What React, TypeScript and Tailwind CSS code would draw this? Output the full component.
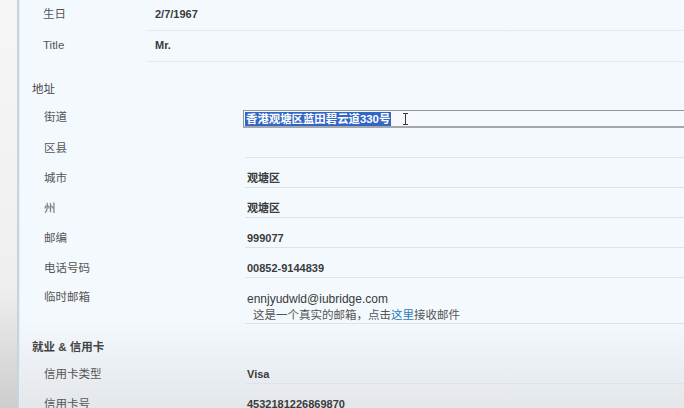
// Profile detail page – address / card section, as seen mid-scroll
import type { ReactNode } from "react";

const labelCls = "text-[11.5px] leading-[14px] text-[#555]";
const valueCls = "text-[11px] leading-[14px] font-bold text-[#3b3b3b]";

function TopRow({ label, value }: { label: string; value: string }) {
  return (
    <div className="flex">
      <div className={`w-[127px] h-[31px] flex items-center pl-[23px] pb-[3px] ${labelCls}`}>{label}</div>
      <div className={`flex-1 h-[31px] flex items-center pl-[8px] pb-[2px] border-b border-[#e3e9ee] ${valueCls}`}>
        {value}
      </div>
    </div>
  );
}

function Row({ label, children, tall }: { label: string; children?: ReactNode; tall?: boolean }) {
  return (
    <div className="flex">
      <div className={`w-[225px] pl-[24px] ${tall ? "pt-[12px]" : "pt-[13px]"} ${labelCls}`}>{label}</div>
      <div
        className={`flex-1 ${tall ? "h-[46px]" : "h-[30px]"} pt-[13px] pl-[2px] text-[11px] leading-[14px] border-b border-[#dde3e8]`}
      >
        {children}
      </div>
    </div>
  );
}

function SectionHead({ children, className }: { children: ReactNode; className?: string }) {
  return (
    <div className={`pl-[12px] text-[11.5px] leading-[14px] font-bold text-[#454545] ${className ?? ""}`}>
      {children}
    </div>
  );
}

function IBeam() {
  return (
    <svg width="7" height="12" viewBox="0 0 7 12" className="ml-[11px]">
      <path d="M1 0.5h5M1 11.5h5M3.5 0.5v11" stroke="#3a3a3a" strokeWidth="1" fill="none" />
    </svg>
  );
}

export default function App() {
  return (
    <div className="w-[684px] h-[408px] overflow-hidden flex font-['Liberation_Sans','Noto_Sans_CJK_SC',sans-serif]">
      {/* left gutter + frame edge */}
      <div className="w-[17px] bg-linear-to-b from-[#f6f6f6] via-[#efefef] via-70% to-[#cdcdcd]" />
      <div className="w-[3px] bg-[#c6d5df] border-r border-[#e6eef4]" />

      {/* main panel */}
      <div className="flex-1 flex flex-col bg-linear-to-b from-[#f4f9fe] from-78% to-[#e3e7ea]">
        <TopRow label="生日" value="2/7/1967" />
        <TopRow label="Title" value="Mr." />

        <SectionHead className="mt-[20px] font-normal text-[#3f3f3f]">地址</SectionHead>

        {/* street – input with selected text */}
        <div className="flex h-[32px]">
          <div className={`w-[223px] pl-[24px] pt-[14px] ${labelCls}`}>街道</div>
          <div className="flex-1 mt-[14px] h-[18px] flex items-center border-t border-l border-[#8f969c] border-b-2 border-b-[#a2a8ad] bg-[#f6faff]">
            <span className="ml-[1px] h-[14px] px-[1px] bg-[#3266c5] text-white text-[11.4px] leading-[14px] font-bold">
              香港观塘区蓝田碧云道330号
            </span>
            <IBeam />
          </div>
        </div>

        <Row label="区县" />
        <Row label="城市"><span className={valueCls}>观塘区</span></Row>
        <Row label="州"><span className={valueCls}>观塘区</span></Row>
        <Row label="邮编"><span className={valueCls}>999077</span></Row>
        <Row label="电话号码"><span className={valueCls}>00852-9144839</span></Row>
        <Row label="临时邮箱" tall>
          <div className="text-[12px] leading-[16px] text-[#3a3a3a]">ennjyudwld@iubridge.com</div>
          <div className="pl-[6px] text-[11.5px] leading-[16px] text-[#555]">
            这是一个真实的邮箱，点击<span className="text-[#2b79b9]">这里</span>接收邮件
          </div>
        </Row>

        <SectionHead className="mt-[16px]">就业 &amp; 信用卡</SectionHead>

        <Row label="信用卡类型"><span className={valueCls}>Visa</span></Row>
        <Row label="信用卡号"><span className={valueCls}>4532181226869870</span></Row>
      </div>
    </div>
  );
}
